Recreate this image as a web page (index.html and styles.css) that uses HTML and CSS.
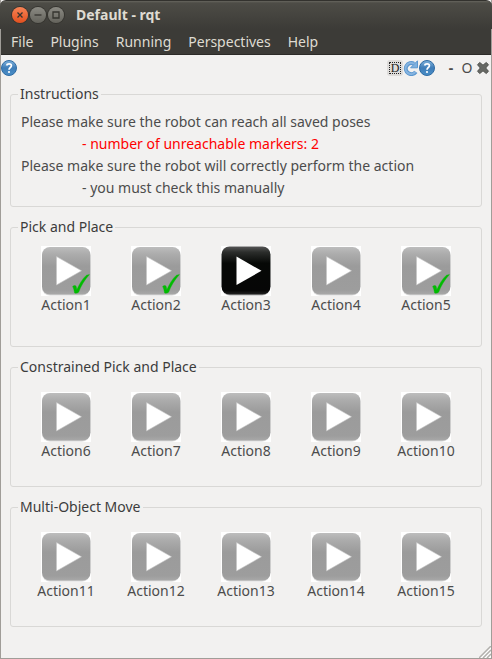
FILE: index.html
```
<!DOCTYPE html>
<html lang="en">
<head>
<meta charset="utf-8">
<meta name="viewport" content="width=device-width, initial-scale=1">
<title>Default - rqt</title>
<link rel="stylesheet" href="styles.css">
</head>
<body>
<svg class="defs" aria-hidden="true">
  <defs>
    <linearGradient id="grey" x1="0" y1="0" x2="0" y2="1">
      <stop offset="0" stop-color="#bdbdbd"/><stop offset=".15" stop-color="#acacac"/><stop offset=".4" stop-color="#9b9b9b"/><stop offset=".9" stop-color="#9d9d9d"/><stop offset="1" stop-color="#a8a8a8"/>
    </linearGradient>
    <linearGradient id="black" x1="0" y1="0" x2="0" y2="1">
      <stop offset="0" stop-color="#555"/><stop offset=".12" stop-color="#2b2d2b"/><stop offset=".35" stop-color="#060806"/><stop offset=".92" stop-color="#060606"/><stop offset="1" stop-color="#222"/>
    </linearGradient>
    <linearGradient id="blue" x1="0" y1="0" x2="0" y2="1">
      <stop offset="0" stop-color="#7fb2dc"/><stop offset=".5" stop-color="#3f7db8"/><stop offset="1" stop-color="#4a8fc8"/>
    </linearGradient>
    <symbol id="play-grey" viewBox="0 0 50 50">
      <path fill="#fff" d="M0 0h50v50H0z"/>
      <rect x="1" y="2" width="48" height="47.500" rx="8" fill="#d6d6d6"/>
      <rect x="1" y="1" width="48.500" height="47.500" rx="8" fill="url(#grey)"/>
      <path fill="#fff" stroke="#c4c4c4" stroke-width=".6" d="M15.500 10.500v28.500l25-14.200z"/>
    </symbol>
    <symbol id="play-black" viewBox="0 0 50 50">
      <path fill="#fff" d="M0 0h50v50H0z"/>
      <rect x="1" y="2" width="48" height="47.500" rx="8" fill="#aaa"/>
      <rect x=".5" y=".5" width="49" height="48" rx="8" fill="url(#black)"/>
      <path fill="#fff" d="M15.500 10.500v28.500l25-14.200z"/>
    </symbol>
    <symbol id="check" viewBox="0 0 18 20">
      <path fill="#0b0" stroke="#0b0" stroke-width=".4" d="M.6 12.600C2 11 4 11 4.300 13l.5 2.800C7.300 10.200 10.500 4.500 14.500 1.200L17.400.6C12.500 6 9 11.800 6.600 18.200c-1.100 1-2.700 1.200-4 .8C2.100 16.700 1.800 14.200.6 12.600z"/>
    </symbol>
    <symbol id="help" viewBox="0 0 16 16">
      <circle cx="8" cy="8" r="7.500" fill="url(#blue)" stroke="#2f6ca4"/>
      <path fill="none" stroke="#fff" stroke-width="1.700" d="M5.600 5.500C6 3.200 10.400 3.200 10.400 5.700c0 1.800-2.400 1.800-2.400 4"/>
      <circle cx="8" cy="12" r="1.100" fill="#fff"/>
    </symbol>
  </defs>
</svg>
<div class="window">
  <header class="titlebar">
    <div class="controls">
      <button class="control close" aria-label="Close"><svg viewBox="0 0 16 16"><path d="M5.500 5.500l5 5m0-5l-5 5"/></svg></button>
      <button class="control" aria-label="Minimize"><svg viewBox="0 0 16 16"><path d="M4.500 8h7"/></svg></button>
      <button class="control" aria-label="Maximize"><svg viewBox="0 0 16 16"><path d="M5 5h6v6H5z"/></svg></button>
    </div>
    <h1>Default - rqt</h1>
  </header>
  <nav class="menubar">
    <button>File</button><button>Plugins</button><button>Running</button><button>Perspectives</button><button>Help</button>
  </nav>
  <div class="dockbar">
    <button class="tool" aria-label="About"><svg viewBox="0 0 16 16"><use href="#help"/></svg></button>
    <div class="tools">
      <button class="tool dock">D</button>
      <button class="tool" aria-label="Reload"><svg viewBox="0 0 16 16"><path fill="none" stroke="#5b97cf" stroke-width="4" d="M12.800 11.800A5.500 5.500 0 1 1 11 3.800"/><path fill="none" stroke="#86b4e0" stroke-width="2" d="M12.300 12A5.500 5.500 0 1 1 11 3.800"/><path fill="#7eb0de" stroke="#5b97cf" d="M14.500.8v7H7.600z"/></svg></button>
      <button class="tool" aria-label="Help"><svg viewBox="0 0 16 16"><use href="#help"/></svg></button>
      <button class="tool dash">-</button>
      <button class="tool">O</button>
      <button class="tool" aria-label="Close panel"><svg viewBox="0 0 16 16"><path fill="#666864" stroke="#50524e" d="M2.500 4.700l2.300-2.200L8 5.200l3.200-2.700 2.300 2.200L10.700 8l2.800 3.300-2.300 2.200L8 10.800l-3.200 2.700-2.300-2.200L5.300 8z"/></svg></button>
    </div>
  </div>
  <main>
    <fieldset class="instructions">
      <legend>Instructions</legend>
      <p>Please make sure the robot can reach all saved poses</p>
      <p class="detail error">- number of unreachable markers: 2</p>
      <p>Please make sure the robot will correctly perform the action</p>
      <p class="detail">- you must check this manually</p>
    </fieldset>
    <fieldset class="actions with-status">
      <legend>Pick and Place</legend>
      <div class="row">
        <button class="action"><svg class="play"><use href="#play-grey"/></svg><svg class="check"><use href="#check"/></svg>Action1</button>
        <button class="action"><svg class="play"><use href="#play-grey"/></svg><svg class="check"><use href="#check"/></svg>Action2</button>
        <button class="action"><svg class="play"><use href="#play-black"/></svg>Action3</button>
        <button class="action"><svg class="play"><use href="#play-grey"/></svg>Action4</button>
        <button class="action"><svg class="play"><use href="#play-grey"/></svg><svg class="check"><use href="#check"/></svg>Action5</button>
      </div>
    </fieldset>
    <fieldset class="actions">
      <legend>Constrained Pick and Place</legend>
      <div class="row">
        <button class="action"><svg class="play"><use href="#play-grey"/></svg>Action6</button>
        <button class="action"><svg class="play"><use href="#play-grey"/></svg>Action7</button>
        <button class="action"><svg class="play"><use href="#play-grey"/></svg>Action8</button>
        <button class="action"><svg class="play"><use href="#play-grey"/></svg>Action9</button>
        <button class="action"><svg class="play"><use href="#play-grey"/></svg>Action10</button>
      </div>
    </fieldset>
    <fieldset class="actions">
      <legend>Multi-Object Move</legend>
      <div class="row">
        <button class="action"><svg class="play"><use href="#play-grey"/></svg>Action11</button>
        <button class="action"><svg class="play"><use href="#play-grey"/></svg>Action12</button>
        <button class="action"><svg class="play"><use href="#play-grey"/></svg>Action13</button>
        <button class="action"><svg class="play"><use href="#play-grey"/></svg>Action14</button>
        <button class="action"><svg class="play"><use href="#play-grey"/></svg>Action15</button>
      </div>
    </fieldset>
  </main>
  <svg class="grip" viewBox="0 0 12 12" aria-hidden="true"><path class="light" d="M1 13L13 1M5 13l8-8M9 13l4-4"/><path d="M0 12L12 0M4 12l8-8M8 12l4-4"/></svg>
</div>
</body>
</html>
```
FILE: styles.css
```
* { box-sizing: border-box; }

body {
  margin: 0;
  background: #3c3b37;
  color: #4c4c4c;
  font: 14px/22px "Noto Sans", "Open Sans", sans-serif;
}

button {
  margin: 0;
  padding: 0;
  border: 0;
  background: none;
  color: inherit;
  font: inherit;
}

svg { display: block; }

.defs {
  position: absolute;
  width: 0;
  height: 0;
}

.window {
  position: relative;
  display: flex;
  flex-direction: column;
  min-height: 100vh;
  border: 1px solid #a09d98;
  border-top: 0;
  background: #f2f1f0;
}

.titlebar {
  display: flex;
  align-items: center;
  gap: 12px;
  height: 29px;
  margin: 0 -1px;
  padding: 0 12px;
  border-top: 1px solid #33322e;
  border-radius: 6px 6px 0 0;
  background: linear-gradient(#66655e, #4d4c46 2px, #3c3b37);
}

.controls {
  display: flex;
  gap: 2px;
}

.control {
  width: 16px;
  height: 16px;
  border-radius: 50%;
  background: linear-gradient(#8b8a83, #64635c);
  box-shadow: 0 0 0 1px #35342f;
}

.control.close { background: linear-gradient(#f78355, #e2501f); }

.control path {
  fill: none;
  stroke: #35342f;
  stroke-width: 1.3;
}

h1 {
  margin: 0;
  color: #dfdbd2;
  font-size: 14px;
  line-height: 22px;
}

.menubar {
  display: flex;
  gap: 17px;
  height: 26px;
  padding: 2px 10px;
  border-bottom: 1px solid #2c2b28;
  background: #3c3b37;
  color: #dfdbd2;
}

.dockbar {
  display: flex;
  justify-content: space-between;
  align-items: center;
  height: 26px;
}

.tools { display: flex; }

.tool {
  width: 16px;
  height: 16px;
  line-height: 16px;
}

.tool.dock {
  border: 2px solid #dedcda;
  border-radius: 3px;
  outline: 1px dotted #222;
  outline-offset: -3px;
  background: #dedcda;
  color: #222;
  font: 12px/12px "Liberation Serif", serif;
}

.tool.dash {
  margin-left: 8px;
  font-weight: bold;
}

main {
  display: flex;
  flex-direction: column;
  gap: 10px;
  padding: 3px 9px 31px;
}

fieldset {
  min-width: 0;
  margin: 0;
  border: 1px solid #d9d8d6;
  border-radius: 3px;
}

legend {
  height: 20px;
  padding: 0 2px;
  color: #3c3c3c;
  line-height: 20px;
}

.instructions { padding: 7px 10px; }

.instructions p { margin: 0; }

.instructions .detail { padding-left: 61px; }

.instructions .error { color: #f00; }

.actions {
  min-height: 130px;
  padding: 15px 10px 0;
}

.with-status { padding-top: 9px; }

.instructions legend,
.actions legend { margin-left: -3px; }

.row {
  display: grid;
  grid-template-columns: repeat(5, 1fr);
}

.action {
  position: relative;
  display: flex;
  flex-direction: column;
  align-items: center;
  line-height: 18px;
}

.play {
  width: 50px;
  height: 50px;
}

.check {
  position: absolute;
  top: 28px;
  left: calc(50% + 6px);
  width: 18px;
  height: 20px;
}

.grip {
  position: absolute;
  right: 0;
  bottom: 0;
  width: 12px;
  height: 12px;
}

.grip path {
  fill: none;
  stroke: #b2b0ad;
  stroke-width: 1.5;
}

.grip .light { stroke: #fff; }
```
